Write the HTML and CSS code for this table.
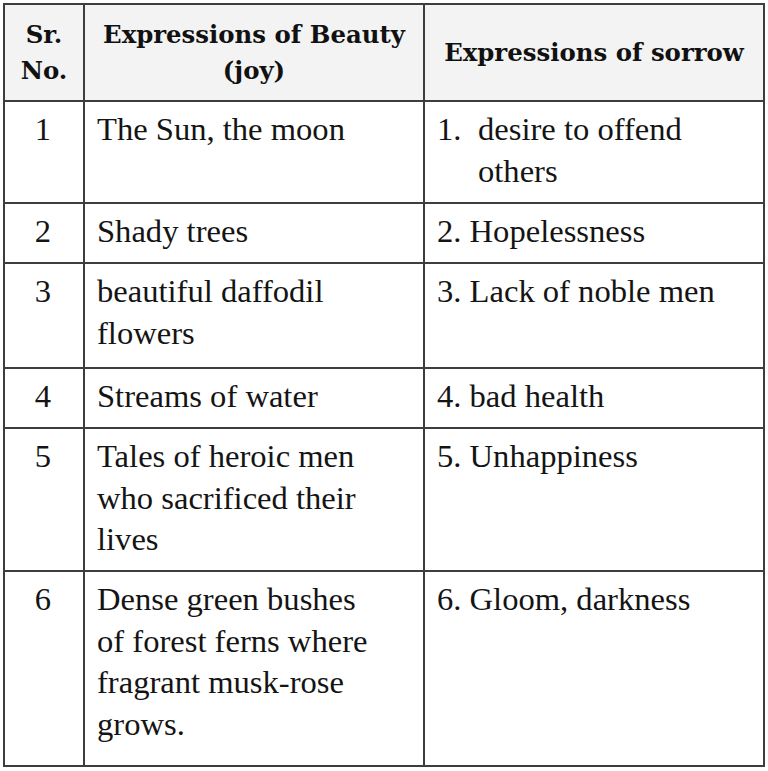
FILE: index.html
```html
<!DOCTYPE html>
<html lang="en">
<head>
<meta charset="utf-8">
<title>Expressions of Beauty and Sorrow</title>
<link rel="stylesheet" href="styles.css">
</head>
<body>
<table class="grid">
  <colgroup>
    <col class="c-no">
    <col class="c-joy">
    <col class="c-sorrow">
  </colgroup>
  <thead>
    <tr class="r-head">
      <th>Sr.<br>No.</th>
      <th>Expressions of Beauty<br>(joy)</th>
      <th>Expressions of sorrow</th>
    </tr>
  </thead>
  <tbody>
    <tr class="r1">
      <td class="num">1</td>
      <td>The Sun, the moon</td>
      <td><div class="hang"><span class="mark">1.</span><span>desire to offend<br>others</span></div></td>
    </tr>
    <tr class="r2">
      <td class="num">2</td>
      <td>Shady trees</td>
      <td>2. Hopelessness</td>
    </tr>
    <tr class="r3">
      <td class="num">3</td>
      <td>beautiful daffodil<br>flowers</td>
      <td>3. Lack of noble men</td>
    </tr>
    <tr class="r4">
      <td class="num">4</td>
      <td>Streams of water</td>
      <td>4. bad health</td>
    </tr>
    <tr class="r5">
      <td class="num">5</td>
      <td>Tales of heroic men<br>who sacrificed their<br>lives</td>
      <td>5. Unhappiness</td>
    </tr>
    <tr class="r6">
      <td class="num">6</td>
      <td>Dense green bushes<br>of forest ferns where<br>fragrant musk-rose<br>grows.</td>
      <td>6. Gloom, darkness</td>
    </tr>
  </tbody>
</table>
</body>
</html>
```

FILE: styles.css
```css
html, body {
  margin: 0;
  padding: 0;
  background: #ffffff;
}

body {
  padding: 3px 0 0 3px;
  color: #141414;
  font-family: "Liberation Serif", "DejaVu Serif", serif;
}

.grid {
  border-collapse: separate;
  border-spacing: 0;
  border-left: 2px solid #3d3d3d;
  border-top: 2px solid #3d3d3d;
  table-layout: fixed;
  width: 762px;
}

.c-no { width: 80px; }
.c-joy { width: 340px; }
.c-sorrow { width: 340px; }

.grid th,
.grid td {
  border-right: 2px solid #3d3d3d;
  border-bottom: 2px solid #3d3d3d;
  box-sizing: border-box;
}

.grid th {
  background: #f3f3f3;
  font-family: "DejaVu Serif", serif;
  font-weight: bold;
  font-size: 24.4px;
  line-height: 36px;
  text-align: center;
  vertical-align: middle;
  padding: 0 2px;
  color: #111111;
}

.grid td {
  font-size: 32.6px;
  line-height: 41.5px;
  vertical-align: top;
  text-align: left;
  padding: 7px 4px 0 12px;
}

.grid td.num {
  text-align: center;
  padding-left: 0;
  padding-right: 2px;
}

.grid td:last-child {
  padding-left: 12px;
}

.hang {
  display: flex;
}

.hang .mark {
  flex: 0 0 41px;
}

.r-head { height: 97px; }
.r1 { height: 102px; }
.r2 { height: 60px; }
.r3 { height: 105px; }
.r4 { height: 60px; }
.r5 { height: 143px; }
.r6 { height: 195px; }
```
